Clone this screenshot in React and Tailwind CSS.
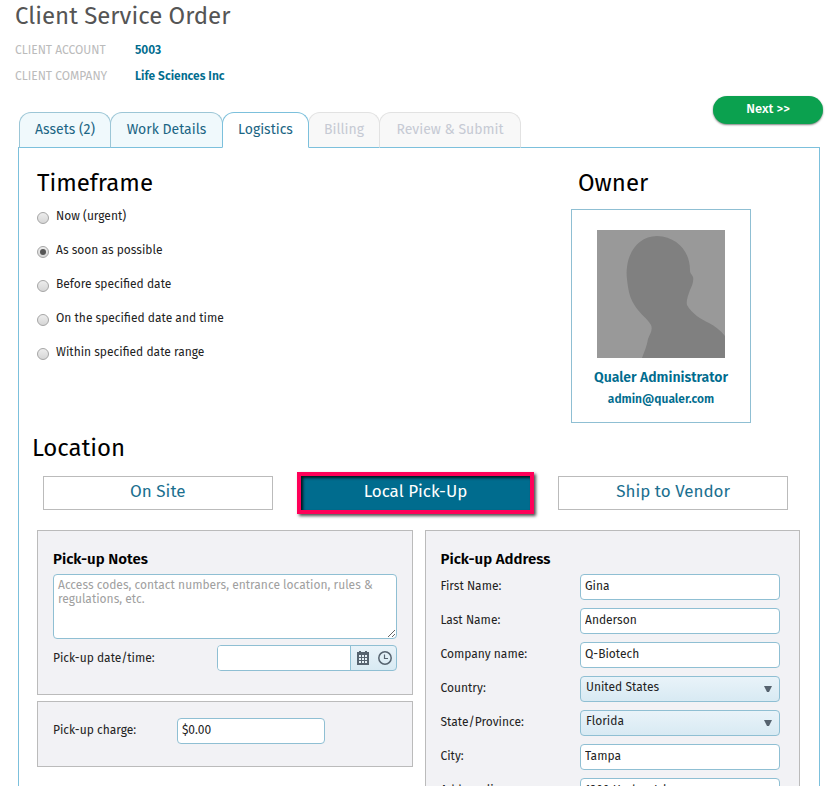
import React, { useState } from "react";
import clsx from "clsx";

const TABS = [
  { id: "assets", label: "Assets (2)", width: "w-[92px]" },
  { id: "work", label: "Work Details", width: "w-[113px]" },
  { id: "logistics", label: "Logistics", width: "w-[87px]" },
  { id: "billing", label: "Billing", width: "w-[72px]", disabled: true },
  { id: "review", label: "Review & Submit", width: "w-[142px]", disabled: true },
];

const TIMEFRAMES = [
  "Now (urgent)",
  "As soon as possible",
  "Before specified date",
  "On the specified date and time",
  "Within specified date range",
];

const LOCATIONS = ["On Site", "Local Pick-Up", "Ship to Vendor"];

const ADDRESS_FIELDS = [
  { id: "firstName", label: "First Name:", value: "Gina" },
  { id: "lastName", label: "Last Name:", value: "Anderson" },
  { id: "company", label: "Company name:", value: "Q-Biotech" },
  { id: "country", label: "Country:", value: "United States", options: ["United States", "Canada", "Mexico"] },
  { id: "state", label: "State/Province:", value: "Florida", options: ["Florida", "Georgia", "Texas"] },
  { id: "city", label: "City:", value: "Tampa" },
  { id: "address1", label: "Address line:", value: "1200 Harbor Isle" },
];

const inputClass =
  "h-[26px] rounded border border-[#8fbfd3] bg-white px-1 pb-0.5 text-xs text-[#222] outline-none";

const Avatar = () => (
  <svg viewBox="0 0 128 128" className="h-32 w-32" role="img" aria-label="Owner photo">
    <rect width="128" height="128" fill="#999" />
    <path
      d="M60 6C43 6 32 20 30 37C29 43 30 50 31 57C32 64 34 70 38 76C43 84 50 88 54 95C56 100 53 104 51 109C50 116 47 122 45 128H128V106C123 100 118 96 112 93C104 89 95 84 90 75C89 71 91 66 93 60C95 56 97 51 96 47C95 44 93 44 93 40C93 22 81 7 60 6Z"
      fill="#808080"
    />
  </svg>
);

const CalendarIcon = () => (
  <svg viewBox="0 0 12 14" className="h-3.5 w-3" aria-hidden="true">
    <path d="M0 1H2V0H4V1H8V0H10V1H12V14H0Z" fill="#56636f" />
    <path
      d="M2 4H4V6H2ZM5 4H7V6H5ZM8 4H10V6H8ZM2 7H4V9H2ZM5 7H7V9H5ZM8 7H10V9H8ZM2 10H4V12H2ZM5 10H7V12H5ZM8 10H10V12H8Z"
      fill="#e6f1f7"
    />
  </svg>
);

const ClockIcon = () => (
  <svg viewBox="0 0 14 14" className="h-3.5 w-3.5" fill="none" stroke="#56636f" aria-hidden="true">
    <circle cx="7" cy="7" r="6.2" strokeWidth="1.5" />
    <path d="M6.5 3.5V7.5H10" strokeWidth="1.2" />
  </svg>
);

const AddressField = ({ field }) => (
  <div className="flex items-center justify-between">
    <label htmlFor={field.id} className="pb-0.5">
      {field.label}
    </label>
    {field.options ? (
      <div className="relative w-[200px]">
        <select
          id={field.id}
          defaultValue={field.value}
          className="block h-[26px] w-full appearance-none rounded border border-[#8fbfd3] bg-linear-to-b from-[#e9f3f9] to-[#d8eaf3] px-[5px] pb-1 text-xs text-[#222] outline-none"
        >
          {field.options.map((option) => (
            <option key={option}>{option}</option>
          ))}
        </select>
        <svg
          viewBox="0 0 8 6"
          className="pointer-events-none absolute top-[10px] right-2 h-1.5 w-2"
          aria-hidden="true"
        >
          <path d="M0 0H8L5 6H3Z" fill="#56636f" />
        </svg>
      </div>
    ) : (
      <input id={field.id} type="text" defaultValue={field.value} className={clsx(inputClass, "w-[200px]")} />
    )}
  </div>
);

const App = () => {
  const [activeTab, setActiveTab] = useState("logistics");
  const [timeframe, setTimeframe] = useState("As soon as possible");
  const [location, setLocation] = useState("Local Pick-Up");

  return (
    <div className="flex h-screen flex-col overflow-hidden bg-white font-['Fira_Sans','Noto_Sans',sans-serif] text-xs text-[#222]">
      {/* Order header */}
      <header className="px-[15px]">
        <h1 className="text-2xl leading-8 text-[#555]">Client Service Order</h1>
        <dl className="mt-[5px] grid grid-cols-[120px_1fr] text-xs leading-[26px]">
          <dt className="text-[#bbb]">CLIENT ACCOUNT</dt>
          <dd className="font-semibold text-[#006c8e]">5003</dd>
          <dt className="text-[#bbb]">CLIENT COMPANY</dt>
          <dd className="font-semibold text-[#006c8e]">Life Sciences Inc</dd>
        </dl>
      </header>

      {/* Tabs and next step */}
      <div className="mt-[7px] flex items-start justify-between pr-4 pl-[19px]">
        <nav className="z-10 mt-4 -mb-px flex">
          {TABS.map((tab, index) => (
            <button
              key={tab.id}
              type="button"
              disabled={tab.disabled}
              onClick={() => setActiveTab(tab.id)}
              className={clsx(
                "h-9 rounded-t-xl border text-[14px] whitespace-nowrap",
                tab.width,
                index > 0 && "-ml-px",
                tab.disabled && "border-[#e2e2e2] border-b-[#7cc0dc] bg-[#f8f8f8] text-[#c6cad4]",
                !tab.disabled && activeTab === tab.id && "z-10 border-[#7cc0dc] border-b-white bg-white text-[#1b6584]",
                !tab.disabled && activeTab !== tab.id && "border-[#9cc6d6] border-b-[#7cc0dc] bg-[#f0f9fc] text-[#1b6584]"
              )}
            >
              {tab.label}
            </button>
          ))}
        </nav>
        <button
          type="button"
          className="h-7 w-[110px] rounded-full bg-[#0ba14f] pb-0.5 text-[13px] font-medium text-white shadow-[0_1px_2px_rgba(0,0,0,0.5)]"
        >
          Next &gt;&gt;
        </button>
      </div>

      <main className="mr-[19px] ml-[18px] flex-1 border border-[#7cc0dc] pt-[19px] pr-[19px] pl-[18px]">
        <div className="flex justify-between">
          <fieldset>
            <legend className="text-2xl leading-8 text-black">Timeframe</legend>
            {TIMEFRAMES.map((option) => (
              <label key={option} className="flex h-[34px] items-center gap-[7px]">
                <input
                  type="radio"
                  name="timeframe"
                  checked={timeframe === option}
                  onChange={() => setTimeframe(option)}
                  className="mt-1 grid h-3 w-3 appearance-none place-items-center rounded-full border border-[#a5a5a5] bg-linear-to-b from-[#ededed] to-[#d6d6d6] checked:before:h-1.5 checked:before:w-1.5 checked:before:rounded-full checked:before:bg-[#555]"
                />
                {option}
              </label>
            ))}
          </fieldset>

          <section className="mr-[49px] w-[180px]">
            <h2 className="pl-[7px] text-2xl leading-8 text-black">Owner</h2>
            <div className="mt-[10px] flex flex-col items-center border border-[#8fbfd3] pt-5 pb-[13px] font-semibold text-[#006c8e]">
              <Avatar />
              <a href="#owner" className="mt-[10px] text-[14px] leading-5">
                Qualer Administrator
              </a>
              <a href="mailto:admin@qualer.com" className="mt-px text-xs leading-5">
                admin@qualer.com
              </a>
            </div>
          </section>
        </div>

        <h2 className="mt-[9px] -ml-[5px] text-2xl leading-8 text-black">Location</h2>
        <div className="mt-3 mr-3 ml-1.5 grid grid-cols-3 gap-7">
          {LOCATIONS.map((option) => (
            <button
              key={option}
              type="button"
              aria-pressed={location === option}
              onClick={() => setLocation(option)}
              className={clsx(
                "h-[34px] pb-[3px] text-[17px] leading-6",
                location === option
                  ? "bg-[#006c8e] text-white shadow-[inset_2px_2px_3px_rgba(0,0,0,0.8),0_0_0_4px_#ff0058,2px_2px_3px_4px_rgba(0,0,0,0.7)]"
                  : "border border-[#bbb] bg-white text-[#1b6f8f]"
              )}
            >
              {option}
            </button>
          ))}
        </div>

        <div className="mt-5 grid grid-cols-2 items-start gap-3">
          <div className="space-y-1.5">
            <section className="border border-[#bbb] bg-[#f2f2f5] px-[15px] pt-[18px] pb-[23px]">
              <h3 className="text-[15px] leading-5 font-semibold text-black">
                <label htmlFor="notes">Pick-up Notes</label>
              </h3>
              <textarea
                id="notes"
                placeholder="Access codes, contact numbers, entrance location, rules & regulations, etc."
                className="mt-[5px] block h-[65px] w-full rounded border border-[#8fbfd3] bg-white px-1 pt-[3px] text-xs leading-[14px] outline-none placeholder:text-[#a0a0a0]"
              />
              <div className="mt-1.5 flex items-center justify-between">
                <label htmlFor="pickupDate">Pick-up date/time:</label>
                <div className="flex h-[26px] w-[180px] overflow-hidden rounded border border-[#8fbfd3] bg-linear-to-b from-[#e9f3f9] to-[#d8eaf3]">
                  <input
                    id="pickupDate"
                    type="text"
                    className="min-w-0 flex-1 border-r border-[#8fbfd3] bg-white px-1 outline-none"
                  />
                  <button type="button" aria-label="Choose date" className="flex w-6 items-center justify-center">
                    <CalendarIcon />
                  </button>
                  <button type="button" aria-label="Choose time" className="flex w-[21px] items-center justify-center">
                    <ClockIcon />
                  </button>
                </div>
              </div>
            </section>

            <section className="flex items-center border border-[#bbb] bg-[#f2f2f5] px-[15px] pt-4 pb-[22px]">
              <label htmlFor="charge" className="w-[124px] pb-0.5">
                Pick-up charge:
              </label>
              <input id="charge" type="text" defaultValue="$0.00" className={clsx(inputClass, "w-[148px]")} />
            </section>
          </div>

          <section className="border border-[#bbb] bg-[#f2f2f5] pt-[18px] pr-[19px] pb-6 pl-[15px]">
            <h3 className="text-[15px] leading-5 font-semibold text-black">Pick-up Address</h3>
            <div className="mt-[5px] space-y-2">
              {ADDRESS_FIELDS.map((field) => (
                <AddressField key={field.id} field={field} />
              ))}
            </div>
          </section>
        </div>
      </main>
    </div>
  );
};

export default App;
